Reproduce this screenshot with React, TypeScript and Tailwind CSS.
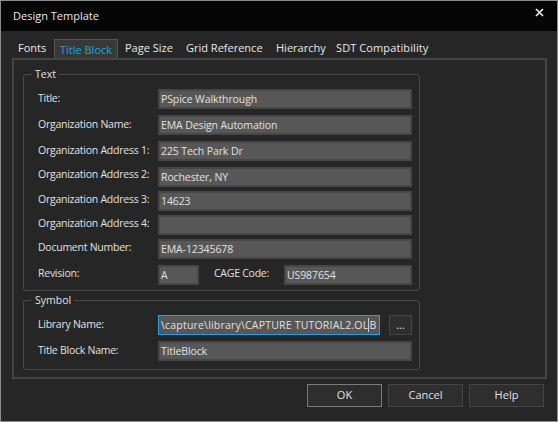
const font = "font-['Open_Sans','Lato',sans-serif]";

const rows = [
  { label: "Title:", value: "PSpice Walkthrough", gap: "", shift: "-mt-0.5" },
  { label: "Organization Name:", value: "EMA Design Automation", gap: "mt-1.5", shift: "-mt-0.5" },
  { label: "Organization Address 1:", value: "225 Tech Park Dr", gap: "mt-1.5", shift: "-mt-0.5" },
  { label: "Organization Address 2:", value: "Rochester, NY", gap: "mt-1.5", shift: "-mt-1.5" },
  { label: "Organization Address 3:", value: "14623", gap: "mt-1", shift: "-mt-1" },
  { label: "Organization Address 4:", value: "", gap: "mt-1", shift: "-mt-1" },
  { label: "Document Number:", value: "EMA-12345678", gap: "mt-1", shift: "-mt-1" },
];

const tabs = [
  { name: "Fonts", width: "w-[42px]", pad: "pl-1.5" },
  { name: "Title Block", width: "w-[64px]", pad: "" },
  { name: "Page Size", width: "w-[61px]", pad: "pl-[7px]" },
  { name: "Grid Reference", width: "w-[90px]", pad: "pl-[7px]" },
  { name: "Hierarchy", width: "w-[60px]", pad: "pl-[7px]" },
  { name: "SDT Compatibility", width: "w-[104px]", pad: "pl-[7px] tracking-[0.1px]" },
];

function Label({ text, className = "w-[120px]", shift = "-mt-0.5" }: { text: string; className?: string; shift?: string }) {
  return <div className={`whitespace-nowrap text-[10.5px] tracking-[-0.25px] leading-4 text-[#e0e0e0] ${shift} ${className}`}>{text}</div>;
}

function Field({ value, className }: { value: string; className: string }) {
  return (
    <div className={`h-5 border-2 border-[#464646] bg-[#575757] pl-px text-[10.5px] tracking-[-0.1px] leading-4 text-[#e0e0e0] whitespace-nowrap overflow-hidden ${className}`}>
      {value}
    </div>
  );
}

function Row({ label, value, gap, shift }: { label: string; value: string; gap: string; shift: string }) {
  return (
    <div className={`flex items-center h-5 ${gap}`}>
      <Label text={label} shift={shift} />
      <Field value={value} className="w-[254px]" />
    </div>
  );
}

function Group({ title, className, children }: { title: string; className: string; children: React.ReactNode }) {
  return (
    <div className={`relative border border-[#4a4a4a] rounded-[3px] pl-3.5 ${className}`}>
      <div className="absolute -top-2 left-2 bg-[#262626] px-[3px] text-[10.5px] leading-[15px] text-[#e0e0e0]">{title}</div>
      {children}
    </div>
  );
}

function Button({ label, primary }: { label: string; primary?: boolean }) {
  return (
    <div className={`w-[75px] h-[23px] flex items-center justify-center bg-[#2e2e2e] text-[11px] text-[#e0e0e0] border ${primary ? "border-[#7a7a7a]" : "border-[#454545]"}`}>
      {label}
    </div>
  );
}

export default function App() {
  return (
    <div className={`w-[558px] h-[422px] flex flex-col bg-[#262626] border border-[#8c8c8c] overflow-hidden ${font}`}>
      <div className="h-[30px] shrink-0 bg-[#050505] flex items-center justify-between pl-3 pr-3">
        <span className="text-[11px] text-[#e8e8e8]">Design Template</span>
        <svg width="9" height="9" viewBox="0 0 9 9" className="mb-2 mr-[1px]">
          <path d="M1 1L8 8M8 1L1 8" stroke="#f0f0f0" strokeWidth="1.6" />
        </svg>
      </div>
      <div className="flex pl-[11px] pt-[8px] h-[27px] shrink-0">
        {tabs.map((t) =>
          t.name === "Title Block" ? (
            <div key={t.name} className={`${t.width} h-[19px] bg-[#383838] border border-b-0 border-[#555] text-center text-[11px] leading-[19px] text-[#1ba1f2]`}>
              {t.name}
            </div>
          ) : (
            <div key={t.name} className={`${t.width} ${t.pad} h-[18px] whitespace-nowrap text-[11px] leading-[18px] text-[#e8e8e8]`}>
              {t.name}
            </div>
          ),
        )}
      </div>
      <div className="ml-[11px] w-[535px] h-[321px] shrink-0 border-2 border-[#444] pl-[9px] pt-[14px] flex flex-col gap-[9px]">
        <Group title="Text" className="w-[397px] h-[217px] pt-3.5 flex flex-col">
          {rows.map((r) => (
            <Row key={r.label} label={r.label} value={r.value} gap={r.gap} shift={r.shift} />
          ))}
          <div className="flex items-center h-5 mt-1.5">
            <Label text="Revision:" shift="-mt-1" />
            <Field value="A" className="w-[41px]" />
            <Label text="CAGE Code:" shift="-mt-1" className="ml-[15px] w-[70px]" />
            <Field value="US987654" className="w-[128px]" />
          </div>
        </Group>
        <Group title="Symbol" className="w-[397px] h-[70px] pt-[14px] flex flex-col gap-1.5">
          <div className="flex items-center h-5">
            <Label text="Library Name:" />
            <div className="w-[222px] h-5 border border-[#1b9ff0] bg-[#575757] pl-[2px] text-[10.5px] tracking-[0.2px] leading-[18px] text-[#e0e0e0] whitespace-nowrap overflow-hidden">
              \capture\library\CAPTURE TUTORIAL2.OL<span className="border-l border-[#d0d0d0]">B</span>
            </div>
            <div className="ml-[9px] w-[23px] h-5 bg-[#2e2e2e] border border-[#454545] text-[11px] leading-[18px] text-center text-[#e0e0e0]">...</div>
          </div>
          <div className="flex items-center h-5">
            <Label text="Title Block Name:" />
            <Field value="TitleBlock" className="w-[254px]" />
          </div>
        </Group>
      </div>
      <div className="flex justify-end gap-1.5 pr-[13px] pt-[5px]">
        <Button label="OK" primary />
        <Button label="Cancel" />
        <Button label="Help" />
      </div>
    </div>
  );
}
